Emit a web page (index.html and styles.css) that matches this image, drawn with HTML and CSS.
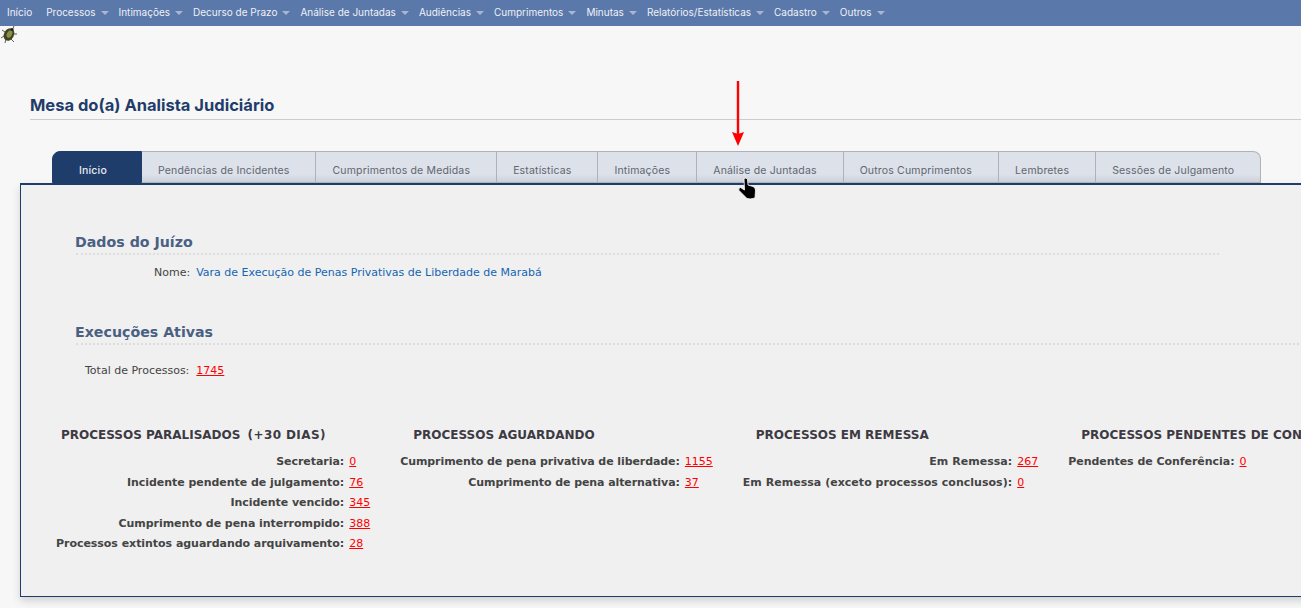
FILE: index.html
```html
<!DOCTYPE html>
<html>
<head>
    <meta charset="UTF-8">
    <title>Mesa do(a) Analista Judiciário</title>
    <link rel="stylesheet" href="styles.css">
</head>
<body>
    <nav class="menu">
        <a class="home">Início</a>
        <a class="drop">Processos</a>
        <a class="drop">Intimações</a>
        <a class="drop">Decurso de Prazo</a>
        <a class="drop">Análise de Juntadas</a>
        <a class="drop">Audiências</a>
        <a class="drop">Cumprimentos</a>
        <a class="drop">Minutas</a>
        <a class="drop">Relatórios/Estatísticas</a>
        <a class="drop">Cadastro</a>
        <a class="drop">Outros</a>
    </nav>

    <div class="bug">
        <svg width="16" height="18" viewBox="0 0 16 18">
            <g stroke="#5c5f5c" stroke-width="1" fill="none">
                <path d="M4 6 L1 4"/>
                <path d="M3 10 L0 12"/>
                <path d="M5 13 L4 17"/>
                <path d="M10 13 L13 16"/>
                <path d="M11 5 L13 0"/>
                <path d="M12 8 L16 8"/>
            </g>
            <ellipse cx="8" cy="8.500" rx="5" ry="6.500" transform="rotate(28 8 8.500)" fill="#3f4520"/>
            <ellipse cx="8.500" cy="8" rx="2.500" ry="4" transform="rotate(28 8.500 8)" fill="#8c8f4a"/>
            <circle cx="11" cy="3.500" r="1.500" fill="#23261a"/>
        </svg>
    </div>

    <h1 class="title">Mesa do(a) Analista Judiciário</h1>

    <ul class="tabs">
        <li class="active">Início</li>
        <li>Pendências de Incidentes</li>
        <li>Cumprimentos de Medidas</li>
        <li>Estatísticas</li>
        <li>Intimações</li>
        <li>Análise de Juntadas</li>
        <li>Outros Cumprimentos</li>
        <li>Lembretes</li>
        <li>Sessões de Julgamento</li>
    </ul>

    <div class="panel">
        <h2 class="section short">Dados do Juízo</h2>
        <div class="field nome">
            <span>Nome:</span>
            <span class="blue">Vara de Execução de Penas Privativas de Liberdade de Marabá</span>
        </div>

        <h2 class="section second">Execuções Ativas</h2>
        <div class="field total">
            <span>Total de Processos:</span>
            <a class="num">1745</a>
        </div>

        <div class="cols">
            <div class="col first">
                <h3>PROCESSOS PARALISADOS <span class="dias">(+30 DIAS)</span></h3>
                <div class="rows">
                    <b>Secretaria:</b><a class="num">0</a>
                    <b>Incidente pendente de julgamento:</b><a class="num">76</a>
                    <b>Incidente vencido:</b><a class="num">345</a>
                    <b>Cumprimento de pena interrompido:</b><a class="num">388</a>
                    <b>Processos extintos aguardando arquivamento:</b><a class="num">28</a>
                </div>
            </div>
            <div class="col tight">
                <h3>PROCESSOS AGUARDANDO</h3>
                <div class="rows">
                    <b>Cumprimento de pena privativa de liberdade:</b><a class="num">1155</a>
                    <b>Cumprimento de pena alternativa:</b><a class="num">37</a>
                </div>
            </div>
            <div class="col loose">
                <h3>PROCESSOS EM REMESSA</h3>
                <div class="rows">
                    <b>Em Remessa:</b><a class="num">267</a>
                    <b>Em Remessa (exceto processos conclusos):</b><a class="num">0</a>
                </div>
            </div>
            <div class="col">
                <h3>PROCESSOS PENDENTES DE CONFERÊNCIA</h3>
                <div class="rows">
                    <b>Pendentes de Conferência:</b><a class="num">0</a>
                </div>
            </div>
        </div>
    </div>

    <svg class="arrow" width="14" height="66" viewBox="0 0 14 66">
        <path d="M5.800 0 H8.200 V53 H5.800 Z M1 51 L7 53 L13 51 L7 65 Z" fill="#f00"/>
    </svg>

    <svg class="hand" width="21" height="24" viewBox="0 0 21 24">
        <path d="M7 1.500 Q9 0.500 10.500 2 L11 8 L16 9.500 Q18.500 10.500 18.500 13 L18 21 Q13 22.500 10 21.500 L2 13.500 Q1 11 3.500 10.500 L7.500 13 Z" fill="#000" stroke="#fff" stroke-width="0.800"/>
    </svg>
</body>
</html>
```

FILE: styles.css
```css
html, body {
    margin: 0;
    height: 608px;
    overflow: hidden;
}

body {
    position: relative;
    background-color: #f7f7f7;
    font-family: "DejaVu Sans", Verdana, sans-serif;
    font-size: 11px;
    color: #444;
}

.menu {
    display: flex;
    height: 26px;
    box-sizing: border-box;
    align-items: center;
    padding: 0 0 2px 7px;
    gap: 10px;
    background-color: #5a78aa;
    font-family: Inter, sans-serif;
    font-size: 10px;
    color: #eef1f6;
}

.menu .home {
    margin-right: 4px;
}

.menu .drop::after {
    content: "";
    display: inline-block;
    margin-left: 5px;
    vertical-align: 1px;
    border-left: 4px solid transparent;
    border-right: 4px solid transparent;
    border-top: 4px solid #a9b6cd;
}

.bug {
    height: 18px;
    padding-left: 1px;
    line-height: 0;
}

.title {
    margin: 0 0 0 30px;
    padding: 51px 0 4px;
    border-bottom: 1px solid #ccc;
    font-family: Inter, sans-serif;
    font-size: 16.500px;
    line-height: 20px;
    font-weight: 700;
    color: #1f3d6b;
}

.tabs {
    display: flex;
    width: 1209px;
    height: 32px;
    box-sizing: border-box;
    margin: 31px 0 0 52px;
    padding: 0;
    list-style: none;
    font-family: Inter, sans-serif;
    font-size: 10.5px;
    letter-spacing: 0.17px;
    color: #5f6672;
}

.tabs li {
    padding: 12px 26px 0 16px;
    line-height: 14px;
    white-space: nowrap;
    border: 1px solid #b0b2b6;
    border-left: 0;
    background: linear-gradient(to bottom, #dde1e9 75%, #ccd0d8 100%);
}

.tabs li:first-child {
    border: 1px solid #1f3d6b;
    border-radius: 8px 0 0 0;
}

.tabs li:last-child {
    flex: 1;
    border-radius: 0 8px 0 0;
}

.tabs .active {
    padding: 12px 34px 0 26px;
    background: #1f3d6b;
    color: #e6ebf3;
    font-weight: 500;
}

.panel {
    width: 1400px;
    height: 414px;
    box-sizing: border-box;
    margin-left: 20px;
    border: 1px solid #1f3d6b;
    border-top-width: 2px;
    background-color: #f0f0f0;
    box-shadow: 0 4px 8px rgba(0, 0, 0, 0.15);
}

.section {
    margin: 48px 0 0 55px;
    padding: 0 0 1px;
    text-indent: -1px;
    border-bottom: 2px dotted #ddd;
    font-size: 14.200px;
    line-height: 19px;
    font-weight: 700;
    color: #4a6083;
}

.section.short {
    width: 1143px;
}

.section.second {
    margin-top: 42px;
}

.field {
    display: flex;
    gap: 6px;
    line-height: 16px;
}

.nome {
    margin: 10px 0 0 133px;
}

.total {
    gap: 7px;
    margin: 18px 0 0 64px;
}

.blue {
    color: #1565b0;
}

.num {
    color: #f00;
    text-decoration: underline;
    font-weight: 400;
}

.cols {
    display: flex;
    gap: 30px;
    margin: 48px 0 0 35px;
}

.col {
    flex-shrink: 0;
}

.col h3 {
    width: 0;
    margin: 0 0 9px 13px;
    font-size: 12px;
    line-height: 16px;
    font-weight: 700;
    white-space: nowrap;
    color: #3d3a44;
}

.col.first h3 {
    margin-left: 5px;
}

.dias {
    margin-left: 3px;
    letter-spacing: 0.4px;
}

.rows {
    display: grid;
    grid-template-columns: auto auto;
    column-gap: 5px;
    line-height: 20.500px;
    text-align: left;
}

.rows b {
    text-align: right;
    white-space: nowrap;
    letter-spacing: -0.04px;
}

.tight .rows b {
    letter-spacing: -0.08px;
}

.loose .rows b {
    letter-spacing: 0.03px;
}

.arrow {
    position: absolute;
    left: 731px;
    top: 81px;
}

.hand {
    position: absolute;
    left: 737px;
    top: 177px;
}
```
